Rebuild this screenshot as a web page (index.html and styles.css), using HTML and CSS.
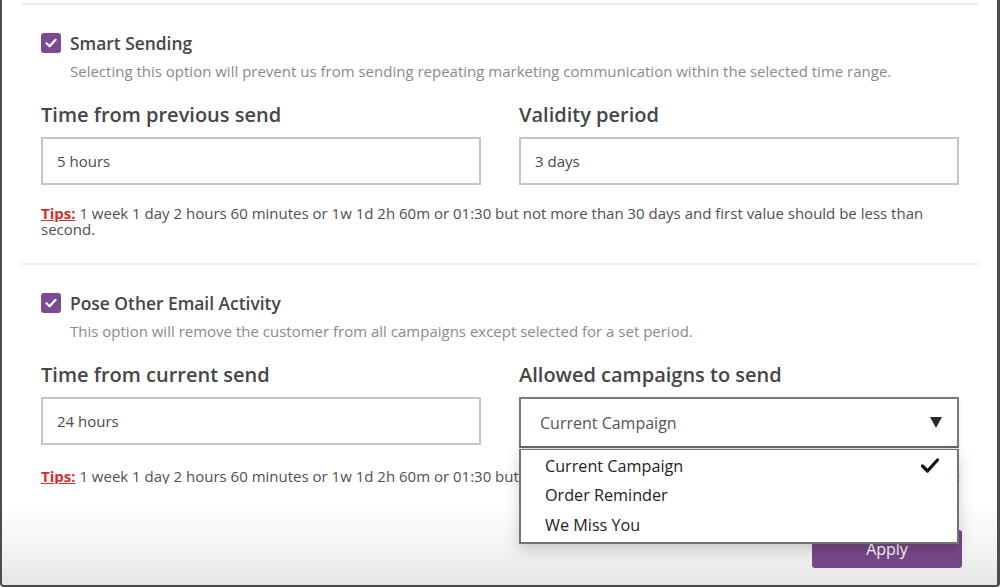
FILE: index.html
```html
<!DOCTYPE html>
<html>
<head>
<meta charset="utf-8">
<link rel="stylesheet" href="styles.css">
</head>
<body>
<div class="modal">
  <div class="divider first"></div>
  <section class="section">
    <div class="check-row">
      <span class="checkbox"><svg viewBox="0 0 20 20" width="20" height="20"><path d="M5.5 10.3 L8.6 13.3 L14.6 6.8" fill="none" stroke="#fff" stroke-width="2.2" stroke-linecap="round" stroke-linejoin="round"/></svg></span>
      <span class="check-label">Smart Sending</span>
    </div>
    <p class="desc">Selecting this option will prevent us from sending repeating marketing communication within the selected time range.</p>
    <div class="fields">
      <div class="field">
        <h3 class="field-title">Time from previous send</h3>
        <div class="input">5 hours</div>
      </div>
      <div class="field">
        <h3 class="field-title">Validity period</h3>
        <div class="input">3 days</div>
      </div>
    </div>
    <p class="tips"><span class="tips-label">Tips:</span> 1 week 1 day 2 hours 60 minutes or 1w 1d 2h 60m or 01:30 but not more than 30 days and first value should be less than second.</p>
  </section>
  <div class="divider"></div>
  <section class="section">
    <div class="check-row">
      <span class="checkbox"><svg viewBox="0 0 20 20" width="20" height="20"><path d="M5.5 10.3 L8.6 13.3 L14.6 6.8" fill="none" stroke="#fff" stroke-width="2.2" stroke-linecap="round" stroke-linejoin="round"/></svg></span>
      <span class="check-label">Pose Other Email Activity</span>
    </div>
    <p class="desc">This option will remove the customer from all campaigns except selected for a set period.</p>
    <div class="fields">
      <div class="field">
        <h3 class="field-title">Time from current send</h3>
        <div class="input">24 hours</div>
      </div>
      <div class="field">
        <h3 class="field-title">Allowed campaigns to send</h3>
        <div class="select-wrap">
          <div class="select">
            <span>Current Campaign</span>
            <svg class="arrow" viewBox="0 0 12 11" width="12" height="11"><path d="M0 0 H12 L6 11 Z" fill="#2b2b2b"/></svg>
          </div>
          <ul class="menu">
            <li class="menu-item selected"><span>Current Campaign</span><svg class="tick" viewBox="0 0 18 15" width="18" height="15"><path d="M1.5 8 L6.5 13 L16.5 2" fill="none" stroke="#111" stroke-width="3.2" stroke-linecap="round" stroke-linejoin="round"/></svg></li>
            <li class="menu-item"><span>Order Reminder</span></li>
            <li class="menu-item"><span>We Miss You</span></li>
          </ul>
        </div>
      </div>
    </div>
    <p class="tips single"><span class="tips-label">Tips:</span> 1 week 1 day 2 hours 60 minutes or 1w 1d 2h 60m or 01:30 but not more than 30 days and first value should be less than second.</p>
    <div class="footer">
      <button class="apply">Apply</button>
    </div>
  </section>
</div>
</body>
</html>
```

FILE: styles.css
```css
* { box-sizing: border-box; }
html, body { margin: 0; padding: 0; background: #ffffff; }
body {
  font-family: "Open Sans", "Liberation Sans", sans-serif;
  width: 1000px;
  height: 588px;
  overflow: hidden;
}
.modal {
  width: 1000px;
  height: 587px;
  border-left: 2px solid #4d4d4d;
  border-right: 3px solid #4d4d4d;
  border-bottom: 2px solid #4d4d4d;
  border-radius: 0 0 4px 4px;
  padding: 0 19px 0 20px;
  background: linear-gradient(to bottom, #ffffff 0%, #ffffff 86%, #f3f3f3 94%, #e6e6e6 100%);
  overflow: hidden;
}
.divider {
  border-top: 2px solid #ececec;
  margin-top: 26px;
}
.divider.first { margin-top: 3px; }
.section { padding: 0 18px 0 19px; }
.check-row {
  display: flex;
  align-items: center;
  height: 20px;
  margin-top: 28px;
}
.checkbox {
  width: 20px;
  height: 20px;
  border-radius: 3px;
  background: #7a4b94;
  display: inline-flex;
  flex: none;
}
.check-label {
  margin-left: 9px;
  font-size: 17.4px;
  font-weight: 600;
  color: #464646;
  line-height: 20px;
}
.desc {
  margin: 8px 0 0 29px;
  font-size: 15px;
  line-height: 20px;
  color: #8a8a8a;
}
.fields {
  display: grid;
  grid-template-columns: 440px 440px;
  column-gap: 38px;
  margin-top: 21px;
}
.field-title {
  margin: 0 0 9px 0;
  font-size: 20px;
  font-weight: 600;
  line-height: 26px;
  color: #464646;
}
.input {
  height: 48px;
  border: 2px solid #c6c6c6;
  padding: 0 14px;
  display: flex;
  align-items: center;
  font-size: 15px;
  color: #4a4a4a;
}
.tips {
  margin: 20px 0 0 0;
  font-size: 15px;
  line-height: 16px;
  color: #505050;
  padding-right: 20px;
}
.tips.single {
  white-space: nowrap;
  overflow: hidden;
  padding-right: 0;
}
.tips-label {
  color: #d3302c;
  font-weight: 700;
  text-decoration: underline;
}
.select-wrap { position: relative; }
.select {
  height: 51px;
  border: 2px solid #7a7a7a;
  border-bottom-color: #666;
  padding: 0 15px 0 19px;
  display: flex;
  align-items: center;
  justify-content: space-between;
  font-size: 16px;
  color: #555;
  box-shadow: 0 2px 4px rgba(0,0,0,0.12);
}
.arrow { flex: none; }
.menu {
  position: absolute;
  left: 0;
  right: 0;
  top: 52px;
  margin: 0;
  padding: 1px 0 2px 0;
  list-style: none;
  background: #ffffff;
  border: 2px solid #737373;
  border-top-width: 1px;
  box-shadow: 0 6px 14px rgba(0,0,0,0.18);
  z-index: 5;
}
.menu-item {
  height: 29.5px;
  display: flex;
  align-items: center;
  justify-content: space-between;
  padding: 0 18px 0 24px;
  font-size: 16.2px;
  color: #232323;
}
.tick { flex: none; }
.footer {
  display: flex;
  justify-content: flex-end;
  margin-top: 46px;
  margin-right: -2px;
}
.apply {
  width: 150px;
  height: 38px;
  border: none;
  border-radius: 3px;
  background: #774888;
  color: #ffffff;
  font-family: "Open Sans", "Liberation Sans", sans-serif;
  font-size: 16px;
  padding: 0;
}
```
